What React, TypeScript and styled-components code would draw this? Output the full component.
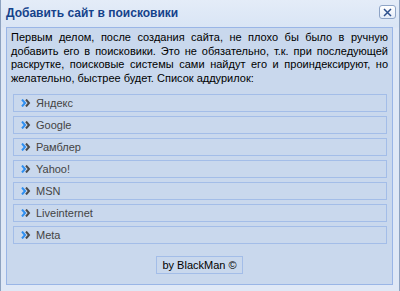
import React from 'react';
import styled, { createGlobalStyle } from 'styled-components';

const GlobalStyle = createGlobalStyle`
  html, body {
    margin: 0;
    padding: 0;
    background: #dfe8f6;
  }
  body {
    font-family: "Liberation Sans", Arial, sans-serif;
  }
`;

const Window = styled.div`
  box-sizing: border-box;
  width: 400px;
  height: 291px;
  display: flex;
  flex-direction: column;
  border-left: 1px solid #8da2c0;
  border-right: 1px solid #8da2c0;
  background: linear-gradient(to bottom, #e4ecf8 0px, #d9e5f5 27px, #dfe8f6 28px);
`;

const TitleBar = styled.div`
  height: 27px;
  display: flex;
  align-items: flex-start;
  justify-content: space-between;
  padding: 0 3px 0 5px;
`;

const Title = styled.h1`
  margin: 6px 0 0;
  font-size: 12px;
  line-height: 14px;
  font-weight: bold;
  color: #15428b;
`;

const CloseButton = styled.button`
  box-sizing: border-box;
  margin-top: 5px;
  width: 17px;
  height: 14px;
  padding: 0;
  display: flex;
  align-items: center;
  justify-content: center;
  border: 1px solid #8ea4c6;
  border-radius: 3px;
  background: linear-gradient(to bottom, #ffffff, #e3ebf7);
  cursor: pointer;
`;

const Panel = styled.div`
  flex: 1;
  margin: 0 6px 6px 5px;
  border: 1px solid #99b5e6;
  background: #c9d8ed;
  display: flex;
  flex-direction: column;
  padding: 3px 4px 0 4px;
`;

const Intro = styled.div`
  font-size: 11px;
  line-height: 13.5px;
  color: #000;
`;

const Line = styled.div<{ $last?: boolean }>`
  text-align: ${(p) => (p.$last ? 'left' : 'justify')};
  text-align-last: ${(p) => (p.$last ? 'left' : 'justify')};
`;

const List = styled.ul`
  list-style: none;
  margin: 9px 1px 0 2px;
  padding: 0;
  display: flex;
  flex-direction: column;
  gap: 4px;
`;

const Item = styled.li`
  box-sizing: border-box;
  height: 18px;
  border: 1px solid #a3bde8;
  display: flex;
  align-items: center;
  gap: 5px;
  padding-left: 7px;
  font-size: 11px;
  color: #444;
`;

const Footer = styled.div`
  display: flex;
  justify-content: center;
  margin-top: 12px;
`;

const Credit = styled.div`
  box-sizing: border-box;
  height: 18px;
  padding: 0 5px;
  display: flex;
  align-items: center;
  border: 1px solid #a3bde8;
  font-size: 11px;
  color: #000;
`;

const Chevrons = () => (
  <svg width="10" height="8" viewBox="0 0 10 8">
    <polyline points="1,0.5 4,4 1,7.5" fill="none" stroke="#2f8ff0" strokeWidth="2" />
    <polyline points="5,0.5 8,4 5,7.5" fill="none" stroke="#4a4a4a" strokeWidth="2" />
  </svg>
);

const engines = ['Яндекс', 'Google', 'Рамблер', 'Yahoo!', 'MSN', 'Liveinternet', 'Meta'];

const App: React.FC = () => {
  return (
    <>
      <GlobalStyle />
      <Window>
        <TitleBar>
          <Title>Добавить сайт в поисковики</Title>
          <CloseButton aria-label="Закрыть">
            <svg width="9" height="9" viewBox="0 0 9 9">
              <path d="M1 1 L8 8 M8 1 L1 8" stroke="#2c4f8c" strokeWidth="1.5" />
            </svg>
          </CloseButton>
        </TitleBar>
        <Panel>
          <Intro>
            <Line>Первым делом, после создания сайта, не плохо бы было в ручную</Line>
            <Line>добавить его в поисковики. Это не обязательно, т.к. при последующей</Line>
            <Line>раскрутке, поисковые системы сами найдут его и проиндексируют, но</Line>
            <Line $last>желательно, быстрее будет. Список аддурилок:</Line>
          </Intro>
          <List>
            {engines.map((name) => (
              <Item key={name}>
                <Chevrons />
                {name}
              </Item>
            ))}
          </List>
          <Footer>
            <Credit>by BlackMan ©</Credit>
          </Footer>
        </Panel>
      </Window>
    </>
  );
};

export default App;
